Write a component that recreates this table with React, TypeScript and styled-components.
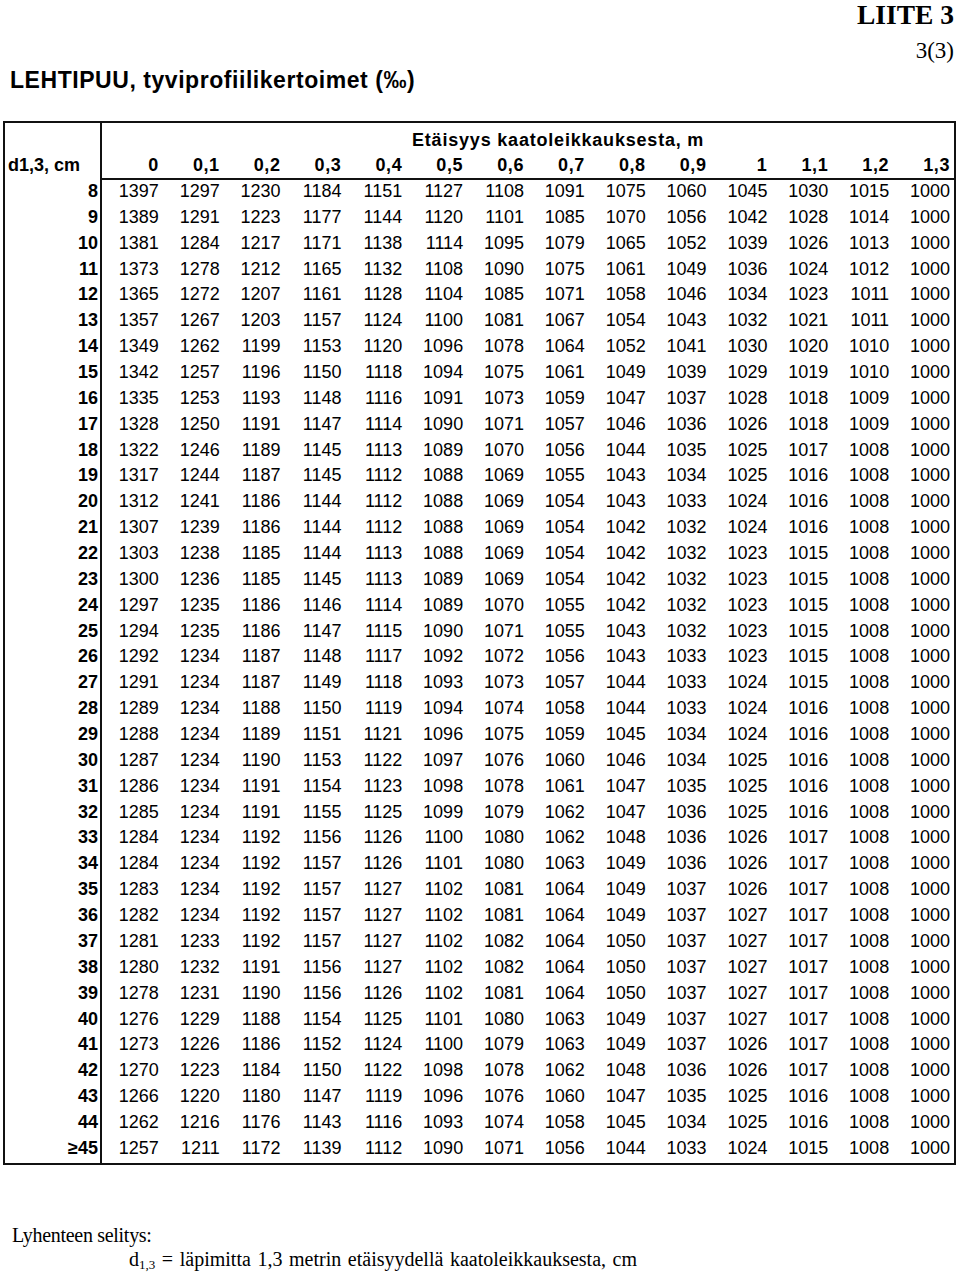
import styled, { createGlobalStyle } from "styled-components";

const GlobalStyle = createGlobalStyle`
  html, body {
    margin: 0;
    padding: 0;
    background: #fff;
  }
  body {
    font-family: "Liberation Sans", Arial, sans-serif;
    color: #000;
  }
`;

const rawRows: [string, string][] = [
  ["8", "1397 1297 1230 1184 1151 1127 1108 1091 1075 1060 1045 1030 1015 1000"],
  ["9", "1389 1291 1223 1177 1144 1120 1101 1085 1070 1056 1042 1028 1014 1000"],
  ["10", "1381 1284 1217 1171 1138 1114 1095 1079 1065 1052 1039 1026 1013 1000"],
  ["11", "1373 1278 1212 1165 1132 1108 1090 1075 1061 1049 1036 1024 1012 1000"],
  ["12", "1365 1272 1207 1161 1128 1104 1085 1071 1058 1046 1034 1023 1011 1000"],
  ["13", "1357 1267 1203 1157 1124 1100 1081 1067 1054 1043 1032 1021 1011 1000"],
  ["14", "1349 1262 1199 1153 1120 1096 1078 1064 1052 1041 1030 1020 1010 1000"],
  ["15", "1342 1257 1196 1150 1118 1094 1075 1061 1049 1039 1029 1019 1010 1000"],
  ["16", "1335 1253 1193 1148 1116 1091 1073 1059 1047 1037 1028 1018 1009 1000"],
  ["17", "1328 1250 1191 1147 1114 1090 1071 1057 1046 1036 1026 1018 1009 1000"],
  ["18", "1322 1246 1189 1145 1113 1089 1070 1056 1044 1035 1025 1017 1008 1000"],
  ["19", "1317 1244 1187 1145 1112 1088 1069 1055 1043 1034 1025 1016 1008 1000"],
  ["20", "1312 1241 1186 1144 1112 1088 1069 1054 1043 1033 1024 1016 1008 1000"],
  ["21", "1307 1239 1186 1144 1112 1088 1069 1054 1042 1032 1024 1016 1008 1000"],
  ["22", "1303 1238 1185 1144 1113 1088 1069 1054 1042 1032 1023 1015 1008 1000"],
  ["23", "1300 1236 1185 1145 1113 1089 1069 1054 1042 1032 1023 1015 1008 1000"],
  ["24", "1297 1235 1186 1146 1114 1089 1070 1055 1042 1032 1023 1015 1008 1000"],
  ["25", "1294 1235 1186 1147 1115 1090 1071 1055 1043 1032 1023 1015 1008 1000"],
  ["26", "1292 1234 1187 1148 1117 1092 1072 1056 1043 1033 1023 1015 1008 1000"],
  ["27", "1291 1234 1187 1149 1118 1093 1073 1057 1044 1033 1024 1015 1008 1000"],
  ["28", "1289 1234 1188 1150 1119 1094 1074 1058 1044 1033 1024 1016 1008 1000"],
  ["29", "1288 1234 1189 1151 1121 1096 1075 1059 1045 1034 1024 1016 1008 1000"],
  ["30", "1287 1234 1190 1153 1122 1097 1076 1060 1046 1034 1025 1016 1008 1000"],
  ["31", "1286 1234 1191 1154 1123 1098 1078 1061 1047 1035 1025 1016 1008 1000"],
  ["32", "1285 1234 1191 1155 1125 1099 1079 1062 1047 1036 1025 1016 1008 1000"],
  ["33", "1284 1234 1192 1156 1126 1100 1080 1062 1048 1036 1026 1017 1008 1000"],
  ["34", "1284 1234 1192 1157 1126 1101 1080 1063 1049 1036 1026 1017 1008 1000"],
  ["35", "1283 1234 1192 1157 1127 1102 1081 1064 1049 1037 1026 1017 1008 1000"],
  ["36", "1282 1234 1192 1157 1127 1102 1081 1064 1049 1037 1027 1017 1008 1000"],
  ["37", "1281 1233 1192 1157 1127 1102 1082 1064 1050 1037 1027 1017 1008 1000"],
  ["38", "1280 1232 1191 1156 1127 1102 1082 1064 1050 1037 1027 1017 1008 1000"],
  ["39", "1278 1231 1190 1156 1126 1102 1081 1064 1050 1037 1027 1017 1008 1000"],
  ["40", "1276 1229 1188 1154 1125 1101 1080 1063 1049 1037 1027 1017 1008 1000"],
  ["41", "1273 1226 1186 1152 1124 1100 1079 1063 1049 1037 1026 1017 1008 1000"],
  ["42", "1270 1223 1184 1150 1122 1098 1078 1062 1048 1036 1026 1017 1008 1000"],
  ["43", "1266 1220 1180 1147 1119 1096 1076 1060 1047 1035 1025 1016 1008 1000"],
  ["44", "1262 1216 1176 1143 1116 1093 1074 1058 1045 1034 1025 1016 1008 1000"],
  ["\u226545", "1257 1211 1172 1139 1112 1090 1071 1056 1044 1033 1024 1015 1008 1000"],
];

const distances = ["0", "0,1", "0,2", "0,3", "0,4", "0,5", "0,6", "0,7", "0,8", "0,9", "1", "1,1", "1,2", "1,3"];

const Page = styled.div`
  width: 960px;
  height: 1272px;
  box-sizing: border-box;
  padding: 0 6px 0 3px;
  display: flex;
  flex-direction: column;
  overflow: hidden;
`;

const Appendix = styled.div`
  display: flex;
  flex-direction: column;
  align-items: flex-end;
  font-family: "Liberation Serif", "Times New Roman", serif;
`;

const AppendixTitle = styled.div`
  font-weight: bold;
  font-size: 27.5px;
  line-height: 30px;
`;

const PageNo = styled.div`
  font-size: 23px;
  line-height: 26px;
  margin-top: 7.5px;
`;

const Title = styled.h1`
  margin: 3.5px 0 0 7px;
  font-size: 23px;
  line-height: 26px;
  font-weight: bold;
  letter-spacing: 0.55px;
`;

const TableBox = styled.div`
  margin-top: 28px;
  width: 953px;
  box-sizing: border-box;
  border: 2px solid #111;
  display: grid;
  grid-template-columns: 97px repeat(14, 1fr);
  grid-template-rows: 26px 31px repeat(38, 25.868px);
  font-size: 18px;
  line-height: 18px;
`;

const CornerCell = styled.div`
  grid-row: 1 / span 2;
  border-right: 2px solid #111;
  padding: 33px 0 0 3px;
  font-weight: bold;
`;

const GroupCell = styled.div`
  grid-column: 2 / span 14;
  padding: 8px 0 0 310px;
  font-weight: bold;
  letter-spacing: 0.8px;
  white-space: nowrap;
`;

const HeadCell = styled.div`
  border-bottom: 2px solid #111;
  padding: 7px 4px 0 0;
  text-align: right;
  font-weight: bold;
  letter-spacing: 0.6px;
`;

const RowLabel = styled.div`
  border-right: 2px solid #111;
  padding: 2px 2px 0 0;
  text-align: right;
  font-weight: bold;
`;

const Cell = styled.div`
  padding: 2px 4px 0 0;
  text-align: right;
`;

const Notes = styled.div`
  margin-top: 58px;
  font-family: "Liberation Serif", "Times New Roman", serif;
  font-size: 20px;
  line-height: 24px;
`;

const NoteLine = styled.div<{ $indent: number; $tracking: number; $spread: number }>`
  padding-left: ${(p) => p.$indent}px;
  letter-spacing: ${(p) => p.$tracking}px;
  word-spacing: ${(p) => p.$spread}px;
  white-space: nowrap;
`;

const Sub = styled.sub`
  font-size: 13px;
  vertical-align: -3px;
  line-height: 0;
`;

export default function App() {
  return (
    <Page>
      <GlobalStyle />
      <Appendix>
        <AppendixTitle>LIITE 3</AppendixTitle>
        <PageNo>3(3)</PageNo>
      </Appendix>
      <Title>LEHTIPUU, tyviprofiilikertoimet (‰)</Title>
      <TableBox>
        <CornerCell>d1,3, cm</CornerCell>
        <GroupCell>Etäisyys kaatoleikkauksesta, m</GroupCell>
        {distances.map((d) => (
          <HeadCell key={d}>{d}</HeadCell>
        ))}
        {rawRows.map(([label, values]) => [
          <RowLabel key={label}>{label}</RowLabel>,
          ...values.split(" ").map((v, i) => <Cell key={label + "-" + i}>{v}</Cell>),
        ])}
      </TableBox>
      <Notes>
        <NoteLine $indent={9} $tracking={-0.3} $spread={0}>
          Lyhenteen selitys:
        </NoteLine>
        <NoteLine $indent={126} $tracking={0} $spread={1.6}>
          d<Sub>1,3</Sub> = läpimitta 1,3 metrin etäisyydellä kaatoleikkauksesta, cm
        </NoteLine>
      </Notes>
    </Page>
  );
}
